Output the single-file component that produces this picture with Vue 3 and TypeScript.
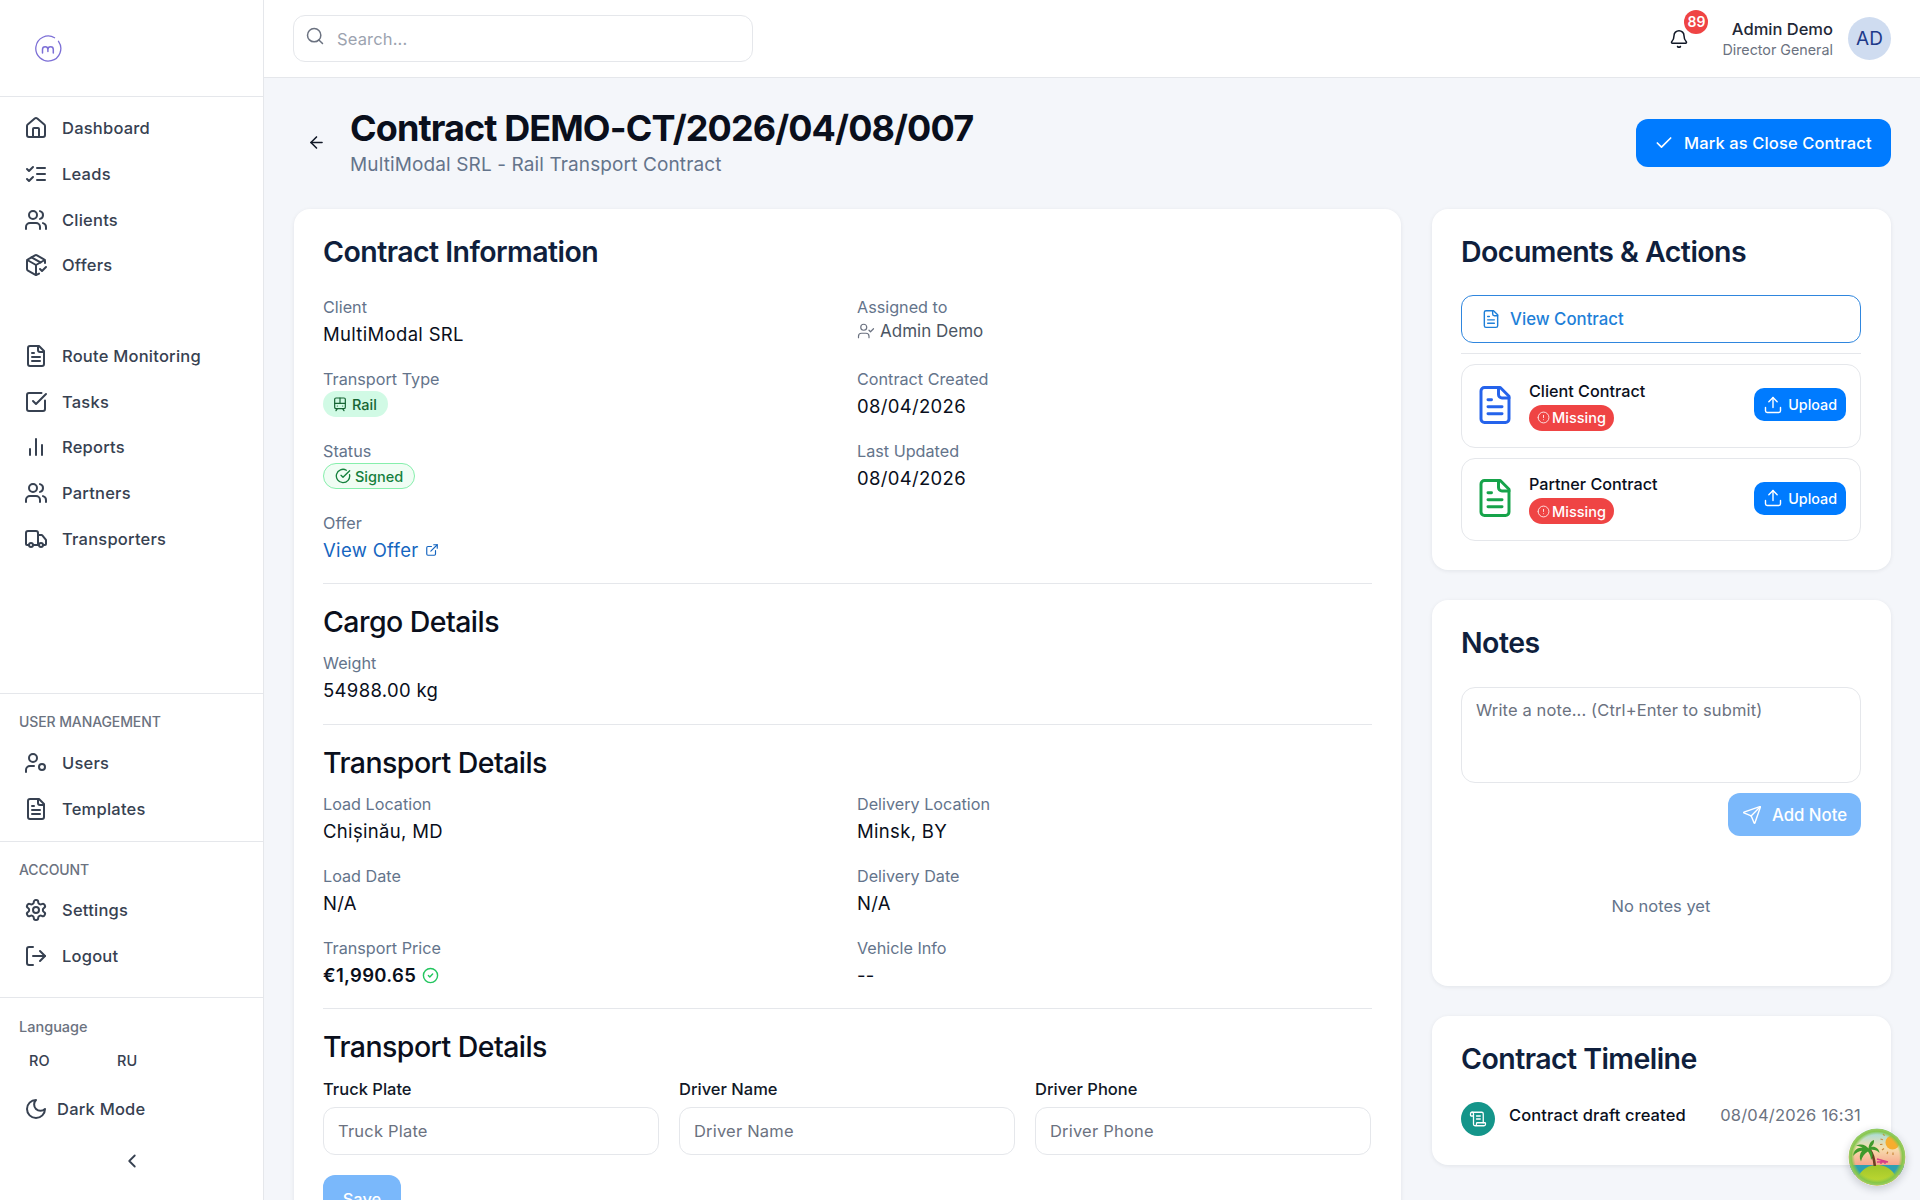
<script setup lang="ts">
import { h } from 'vue'
import type { FunctionalComponent } from 'vue'

const c = (x: number, y: number, r: number) => `M${x - r} ${y}a${r} ${r} 0 1 0 ${2 * r} 0a${r} ${r} 0 1 0 ${-2 * r} 0`

const ICONS: Record<string, string[]> = {
  house: ['M15 21v-8a1 1 0 0 0-1-1h-4a1 1 0 0 0-1 1v8', 'M3 10a2 2 0 0 1 .709-1.528l7-5.999a2 2 0 0 1 2.582 0l7 5.999A2 2 0 0 1 21 10v9a2 2 0 0 1-2 2H5a2 2 0 0 1-2-2z'],
  listChecks: ['m3 17 2 2 4-4', 'm3 7 2 2 4-4', 'M13 6h8', 'M13 12h8', 'M13 18h8'],
  users: ['M16 21v-2a4 4 0 0 0-4-4H6a4 4 0 0 0-4 4v2', c(9, 7, 4), 'M22 21v-2a4 4 0 0 0-3-3.87', 'M16 3.13a4 4 0 0 1 0 7.75'],
  packageCheck: ['m16 16 2 2 4-4', 'M21 10V8a2 2 0 0 0-1-1.73l-7-4a2 2 0 0 0-2 0l-7 4A2 2 0 0 0 3 8v8a2 2 0 0 0 1 1.73l7 4a2 2 0 0 0 2 0l2-1.14', 'm7.5 4.27 9 5.15', 'M3.29 7 12 12l8.71-5', 'M12 22V12'],
  fileText: ['M15 2H6a2 2 0 0 0-2 2v16a2 2 0 0 0 2 2h12a2 2 0 0 0 2-2V7Z', 'M14 2v4a2 2 0 0 0 2 2h4', 'M10 9H8', 'M16 13H8', 'M16 17H8'],
  squareCheck: ['M21 10.5V19a2 2 0 0 1-2 2H5a2 2 0 0 1-2-2V5a2 2 0 0 1 2-2h12.5', 'm9 11 3 3L22 4'],
  bars: ['M18 20V10', 'M12 20V4', 'M6 20v-6'],
  truck: ['M14 18V6a2 2 0 0 0-2-2H4a2 2 0 0 0-2 2v11a1 1 0 0 0 1 1h2', 'M15 18H9', 'M19 18h2a1 1 0 0 0 1-1v-3.65a1 1 0 0 0-.22-.624l-3.48-4.35A1 1 0 0 0 17.52 8H14', c(17, 18, 2), c(7, 18, 2)],
  userCog: [c(18, 16, 3), c(9, 7, 4), 'M10 15H6a4 4 0 0 0-4 4v2'],
  settings: ['M12.22 2h-.44a2 2 0 0 0-2 2v.18a2 2 0 0 1-1 1.73l-.43.25a2 2 0 0 1-2 0l-.15-.08a2 2 0 0 0-2.73.73l-.22.38a2 2 0 0 0 .73 2.73l.15.1a2 2 0 0 1 1 1.72v.51a2 2 0 0 1-1 1.74l-.15.09a2 2 0 0 0-.73 2.73l.22.38a2 2 0 0 0 2.73.73l.15-.08a2 2 0 0 1 2 0l.43.25a2 2 0 0 1 1 1.73V20a2 2 0 0 0 2 2h.44a2 2 0 0 0 2-2v-.18a2 2 0 0 1 1-1.73l.43-.25a2 2 0 0 1 2 0l.15.08a2 2 0 0 0 2.73-.73l.22-.39a2 2 0 0 0-.73-2.73l-.15-.08a2 2 0 0 1-1-1.74v-.5a2 2 0 0 1 1-1.74l.15-.09a2 2 0 0 0 .73-2.73l-.22-.38a2 2 0 0 0-2.73-.73l-.15.08a2 2 0 0 1-2 0l-.43-.25a2 2 0 0 1-1-1.73V4a2 2 0 0 0-2-2z', c(12, 12, 3)],
  logOut: ['M9 21H5a2 2 0 0 1-2-2V5a2 2 0 0 1 2-2h4', 'm16 17 5-5-5-5', 'M21 12H9'],
  moon: ['M12 3a6 6 0 0 0 9 9 9 9 0 1 1-9-9Z'],
  chevronLeft: ['m15 18-6-6 6-6'],
  search: [c(11, 11, 8), 'm21 21-4.3-4.3'],
  bell: ['M10.268 21a2 2 0 0 0 3.464 0', 'M3.262 15.326A1 1 0 0 0 4 17h16a1 1 0 0 0 .74-1.673C19.41 13.956 18 12.499 18 8A6 6 0 0 0 6 8c0 4.499-1.411 5.956-2.738 7.326'],
  arrowLeft: ['m12 19-7-7 7-7', 'M19 12H5'],
  check: ['M20 6 9 17l-5-5'],
  userCheck: ['M16 21v-2a4 4 0 0 0-4-4H6a4 4 0 0 0-4 4v2', c(9, 7, 4), 'm16 11 2 2 4-4'],
  tram: ['M6 3h12a2 2 0 0 1 2 2v12a2 2 0 0 1-2 2H6a2 2 0 0 1-2-2V5a2 2 0 0 1 2-2z', 'M4 11h16', 'M12 3v8', 'm8 19-2 3', 'm18 22-2-3', 'M8 15h.01', 'M16 15h.01'],
  circleCheckBig: ['M21.801 10A10 10 0 1 1 17 3.335', 'm9 11 3 3L22 4'],
  circleCheck: [c(12, 12, 10), 'm9 12 2 2 4-4'],
  external: ['M15 3h6v6', 'M10 14 21 3', 'M18 13v6a2 2 0 0 1-2 2H5a2 2 0 0 1-2-2V8a2 2 0 0 1 2-2h6'],
  upload: ['M12 3v12', 'm17 8-5-5-5 5', 'M21 15v4a2 2 0 0 1-2 2H5a2 2 0 0 1-2-2v-4'],
  alert: [c(12, 12, 10), 'M12 8v4', 'M12 16h.01'],
  send: ['M14.536 21.686a.5.5 0 0 0 .937-.024l6.5-19a.496.496 0 0 0-.635-.635l-19 6.5a.5.5 0 0 0-.024.937l7.93 3.18a2 2 0 0 1 1.112 1.11z', 'm21.854 2.147-10.94 10.939'],
  scroll: ['M15 12h-5', 'M15 8h-5', 'M19 17V5a2 2 0 0 0-2-2H4', 'M8 21h12a2 2 0 0 0 2-2v-1a1 1 0 0 0-1-1H11a1 1 0 0 0-1 1v1a2 2 0 1 1-4 0V5a2 2 0 1 0-4 0v2a1 1 0 0 0 1 1h3'],
}

type IconProps = { name: string; size?: number; sw?: number }
const Icon: FunctionalComponent<IconProps> = (props) =>
  h(
    'svg',
    {
      width: props.size ?? 24,
      height: props.size ?? 24,
      viewBox: '0 0 24 24',
      fill: 'none',
      stroke: 'currentColor',
      'stroke-width': props.sw ?? 2,
      'stroke-linecap': 'round',
      'stroke-linejoin': 'round',
    },
    (ICONS[props.name] ?? []).map((d) => h('path', { d })),
  )
Icon.props = ['name', 'size', 'sw']

const navA = [
  { label: 'Dashboard', icon: 'house' },
  { label: 'Leads', icon: 'listChecks' },
  { label: 'Clients', icon: 'users' },
  { label: 'Offers', icon: 'packageCheck' },
]
const navB = [
  { label: 'Route Monitoring', icon: 'fileText' },
  { label: 'Tasks', icon: 'squareCheck' },
  { label: 'Reports', icon: 'bars' },
  { label: 'Partners', icon: 'users' },
  { label: 'Transporters', icon: 'truck' },
]
const navUser = [
  { label: 'Users', icon: 'userCog' },
  { label: 'Templates', icon: 'fileText' },
]
const navAccount = [
  { label: 'Settings', icon: 'settings' },
  { label: 'Logout', icon: 'logOut' },
]
const transportRows = [
  [{ k: 'Load Location', v: 'Chișinău, MD' }, { k: 'Delivery Location', v: 'Minsk, BY' }],
  [{ k: 'Load Date', v: 'N/A' }, { k: 'Delivery Date', v: 'N/A' }],
]
const driverFields = ['Truck Plate', 'Driver Name', 'Driver Phone']
const docs = [
  { title: 'Client Contract', tone: 'blue' },
  { title: 'Partner Contract', tone: 'green' },
]
</script>

<template>
  <div class="app">
    <aside class="sidebar">
      <div class="logo">
        <svg width="29" height="29" viewBox="0 0 29 29" fill="none" stroke="#7c6fd6" stroke-linecap="round">
          <path d="M20.55 3.7A12.5 12.5 0 1 0 24.5 7.3" stroke-width="1.3" />
          <path d="M8.5 19v-3.5a2.7 2.7 0 0 1 5.4 0v2M13.9 15.5a2.7 2.7 0 0 1 5.4 0v3.5" stroke-width="1.5" />
        </svg>
      </div>
      <nav class="nav nav-top">
        <a v-for="n in navA" :key="n.label" class="item"><Icon :name="n.icon" /><span>{{ n.label }}</span></a>
      </nav>
      <nav class="nav nav-second">
        <a v-for="n in navB" :key="n.label" class="item"><Icon :name="n.icon" /><span>{{ n.label }}</span></a>
      </nav>
      <section class="side-section push">
        <div class="side-label upper">USER MANAGEMENT</div>
        <a v-for="n in navUser" :key="n.label" class="item"><Icon :name="n.icon" /><span>{{ n.label }}</span></a>
      </section>
      <section class="side-section account">
        <div class="side-label upper">ACCOUNT</div>
        <a v-for="n in navAccount" :key="n.label" class="item"><Icon :name="n.icon" /><span>{{ n.label }}</span></a>
      </section>
      <section class="side-section lang">
        <div class="side-label lang-label">Language</div>
        <div class="langs"><span>RO</span><span>RU</span></div>
        <a class="item dark"><Icon name="moon" /><span>Dark Mode</span></a>
        <div class="collapse"><Icon name="chevronLeft" :size="22" /></div>
      </section>
    </aside>

    <div class="main">
      <header class="topbar">
        <div class="search">
          <Icon name="search" :size="20" :sw="1.8" class="search-icon" />
          <input placeholder="Search..." />
        </div>
        <div class="top-right">
          <div class="bell">
            <Icon name="bell" :size="20" :sw="1.8" />
            <span class="badge">89</span>
          </div>
          <div class="who">
            <div class="who-name">Admin Demo</div>
            <div class="who-role">Director General</div>
          </div>
          <div class="avatar">AD</div>
        </div>
      </header>

      <div class="content">
        <div class="page-head">
          <Icon name="arrowLeft" :size="19" class="back" />
          <div class="page-title">
            <h1>Contract DEMO-CT/2026/04/08/007</h1>
            <p>MultiModal SRL - Rail Transport Contract</p>
          </div>
          <button class="primary close"><Icon name="check" :size="20" /><span>Mark as Close Contract</span></button>
        </div>

        <div class="columns">
          <div class="card info">
            <h2 class="card-title">Contract Information</h2>
            <div class="grid">
              <div class="cell">
                <div class="k">Client</div>
                <div class="v">MultiModal SRL</div>
              </div>
              <div class="cell">
                <div class="k">Assigned to</div>
                <div class="v assigned"><Icon name="userCheck" :size="18" :sw="1.6" /><span>Admin Demo</span></div>
              </div>
              <div class="cell">
                <div class="k">Transport Type</div>
                <div class="pill rail"><Icon name="tram" :size="16" :sw="1.8" /><span>Rail</span></div>
              </div>
              <div class="cell">
                <div class="k">Contract Created</div>
                <div class="v">08/04/2026</div>
              </div>
              <div class="cell">
                <div class="k">Status</div>
                <div class="pill signed"><Icon name="circleCheckBig" :size="16" /><span>Signed</span></div>
              </div>
              <div class="cell">
                <div class="k">Last Updated</div>
                <div class="v">08/04/2026</div>
              </div>
              <div class="cell">
                <div class="k">Offer</div>
                <div class="v link"><span>View Offer</span><Icon name="external" :size="14" /></div>
              </div>
            </div>

            <div class="section cargo">
              <h3>Cargo Details</h3>
              <div class="cell">
                <div class="k">Weight</div>
                <div class="v">54988.00 kg</div>
              </div>
            </div>

            <div class="section transport">
              <h3>Transport Details</h3>
              <div class="grid">
                <template v-for="(row, i) in transportRows" :key="i">
                  <div v-for="f in row" :key="f.k" class="cell">
                    <div class="k">{{ f.k }}</div>
                    <div class="v">{{ f.v }}</div>
                  </div>
                </template>
                <div class="cell">
                  <div class="k">Transport Price</div>
                  <div class="v price"><span>€1,990.65</span><Icon name="circleCheck" :size="17" class="ok" /></div>
                </div>
                <div class="cell">
                  <div class="k">Vehicle Info</div>
                  <div class="v">--</div>
                </div>
              </div>
            </div>

            <div class="section driver">
              <h3>Transport Details</h3>
              <div class="fields">
                <label v-for="f in driverFields" :key="f" class="field">
                  <span>{{ f }}</span>
                  <input :placeholder="f" />
                </label>
              </div>
              <button class="primary save">Save</button>
            </div>
          </div>

          <div class="side-cards">
            <div class="card docs">
              <h2 class="card-title">Documents &amp; Actions</h2>
              <button class="outline"><Icon name="fileText" :size="20" :sw="1.7" /><span>View Contract</span></button>
              <div class="doc-list">
                <div v-for="d in docs" :key="d.title" class="doc">
                  <Icon name="fileText" :size="42" :sw="1.7" :class="['doc-icon', d.tone]" />
                  <div class="doc-body">
                    <div class="doc-title">{{ d.title }}</div>
                    <div class="missing"><Icon name="alert" :size="13" :sw="1.5" /><span>Missing</span></div>
                  </div>
                  <button class="primary upload"><Icon name="upload" :size="20" :sw="1.7" /><span>Upload</span></button>
                </div>
              </div>
            </div>

            <div class="card notes">
              <h2 class="card-title">Notes</h2>
              <textarea placeholder="Write a note... (Ctrl+Enter to submit)"></textarea>
              <div class="note-actions">
                <button class="primary add"><Icon name="send" :size="20" :sw="1.7" /><span>Add Note</span></button>
              </div>
              <div class="empty">No notes yet</div>
            </div>

            <div class="card timeline">
              <h2 class="card-title">Contract Timeline</h2>
              <div class="event">
                <div class="event-icon"><Icon name="scroll" :size="18" :sw="1.7" /></div>
                <div class="event-text">Contract draft created</div>
                <div class="event-date">08/04/2026 16:31</div>
              </div>
            </div>
          </div>
        </div>
      </div>
    </div>

    <div class="fab">
      <svg width="58" height="58" viewBox="0 0 58 58">
        <defs>
          <linearGradient id="sky" x1="0" y1="0" x2="0" y2="1">
            <stop offset="0.08" stop-color="#a8dcd8" />
            <stop offset="0.35" stop-color="#f7dfae" />
            <stop offset="0.7" stop-color="#f79a86" />
          </linearGradient>
          <radialGradient id="rim" cx="0.5" cy="0.5" r="0.5">
            <stop offset="0.78" stop-color="#8cc850" stop-opacity="0" />
            <stop offset="0.9" stop-color="#84c648" stop-opacity="0.95" />
            <stop offset="1" stop-color="#9dcc6a" />
          </radialGradient>
          <linearGradient id="land" x1="0" y1="0" x2="0" y2="1">
            <stop offset="0" stop-color="#9fc52a" />
            <stop offset="1" stop-color="#c4dc32" />
          </linearGradient>
          <clipPath id="ball"><circle cx="29" cy="29" r="28.5" /></clipPath>
        </defs>
        <g clip-path="url(#ball)">
          <rect width="58" height="58" fill="url(#sky)" />
          <circle cx="44.5" cy="14.5" r="7" fill="#f7ad2e" />
          <path d="M35 6l1.6 1.6M32.5 11l2.4.8M32 16.5l2.4-.2M34 22l2-1.4M39 26l.8-2.2M45 27v-2.4" stroke="#c98a3c" stroke-width="1.2" />
          <path d="M0 37h58v10H0z" fill="#2e9fb2" />
          <path d="M9 58C8 46 17 37 29 37s21 9 20 21z" fill="url(#land)" />
          <path d="M25.5 38c-.6-7-2.2-12-5-16l2.4-1c3 4.2 4.6 9.6 5.2 17z" fill="#6b3f22" />
          <path d="M21 21c-3-4-8-6-13-3 3 0 5 .6 6.600 2C10 19 5.500 22 5 28c3-3.400 6-5 9-5.200C11.500 26 11 30 13 33.500c1-4.500 3.500-8 7-10 1.500 2 3 5 3 8.500 2.500-3.500 2-7.500-.5-10 3-.8 6.500.3 9 3-.3-4.500-4.500-7-8.500-6 2-2 3.300-4 3-7-3.500 1-5.300 4.500-5.500 9z" fill="#3f9a2c" />
          <path d="M29 31l11 3M29 34h10M33 32v4M37 33v3" stroke="#d83f86" stroke-width="1.4" fill="none" />
          <circle cx="29" cy="29" r="28.500" fill="url(#rim)" />
        </g>
      </svg>
    </div>
  </div>
</template>

<style>
html, body { margin: 0; height: 100%; overflow: hidden; }
</style>

<style scoped>
* { box-sizing: border-box; }
.app {
  position: relative;
  display: flex;
  height: 1200px;
  overflow: hidden;
  background: #f4f6fa;
  font-family: Inter, "Noto Sans", sans-serif;
  color: #0a0f1c;
}
.sidebar {
  flex: 0 0 264px;
  display: flex;
  flex-direction: column;
  background: #fff;
  border-right: 1px solid #e5e7eb;
}
.logo {
  height: 97px;
  flex: none;
  padding: 34px 0 0 34px;
  border-bottom: 1px solid #e5e7eb;
}
.logo svg { display: block; }
.nav { display: flex; flex-direction: column; flex: none; }
.nav-top { padding-top: 8.5px; }
.nav-second { margin-top: 45px; }
.item {
  display: flex;
  align-items: center;
  gap: 14px;
  height: 45.7px;
  padding-left: 24px;
  font-size: 16.5px;
  font-weight: 500;
  letter-spacing: 0.22px;
  color: #374151;
  flex: none;
}
.item svg { flex: none; }
.side-section { flex: none; border-top: 1px solid #e5e7eb; }
.push { margin-top: auto; padding: 18px 0 9px; }
.account { padding: 18px 0 18px; }
.side-label {
  height: 20px;
  line-height: 20px;
  margin: 0 0 8px 19px;
  font-size: 14.5px;
  font-weight: 500;
  color: #6b7280;
}
.upper { font-size: 14px; letter-spacing: -0.1px; }
.lang { padding-top: 19px; height: 203px; }
.lang-label { margin-bottom: 0; }
.langs {
  display: flex;
  margin-top: 14px;
  padding-left: 29px;
  font-size: 14.5px;
  font-weight: 500;
  color: #374151;
  line-height: 20px;
}
.langs span { width: 88px; }
.dark { gap: 9px; margin-top: 15px; }
.collapse {
  display: flex;
  justify-content: center;
  margin-top: 18px;
  color: #374151;
}
.main { flex: 1; min-width: 0; display: flex; flex-direction: column; }
.topbar {
  flex: none;
  height: 78px;
  display: flex;
  align-items: center;
  justify-content: space-between;
  padding: 0 29px;
  background: #fff;
  border-bottom: 1px solid #e5e7eb;
}
.search {
  position: relative;
  width: 460px;
  height: 47px;
}
.search input {
  width: 100%;
  height: 100%;
  padding-left: 43px;
  border: 1px solid #e5e7eb;
  border-radius: 12px;
  background: #fff;
  font: 400 16.5px Inter, sans-serif;
  letter-spacing: 0.15px;
  outline: none;
}
.search input::placeholder { color: #9ca3af; }
.search-icon { position: absolute; left: 12px; top: 11px; color: #6b7280; }
.top-right { display: flex; align-items: center; }
.bell { position: relative; width: 20px; height: 20px; margin-right: 33px; color: #111827; }
.badge {
  position: absolute;
  left: 15px;
  top: -19px;
  width: 24px;
  height: 24px;
  border-radius: 50%;
  background: #ef4444;
  color: #fff;
  font-size: 14px;
  font-weight: 600;
  line-height: 24px;
  text-align: center;
}
.who { text-align: right; margin-right: 15px; }
.who-name { font-size: 16.5px; font-weight: 500; line-height: 22px; color: #1f2937; }
.who-role { font-size: 14.3px; line-height: 20px; color: #6b7280; }
.avatar {
  width: 43px;
  height: 43px;
  border-radius: 50%;
  background: #cfdcf0;
  color: #1e3a8a;
  font-size: 19px;
  line-height: 43px;
  text-align: center;
}
.content { flex: 1; padding: 0 29px 0 30px; }
.page-head {
  display: flex;
  align-items: center;
  height: 131px;
}
.back { margin: -2px 0 0 13px; color: #111827; flex: none; }
.page-title { margin-left: 24px; flex: 1; margin-top: -3px; }
.page-title h1 {
  margin: 0;
  font-size: 36px;
  font-weight: 700;
  line-height: 44px;
  letter-spacing: -0.9px;
  color: #0a0f1c;
}
.page-title p {
  margin: 2px 0 0;
  font-size: 19px;
  line-height: 26px;
  letter-spacing: 0.12px;
  color: #64748b;
}
.primary {
  display: inline-flex;
  align-items: center;
  border: 0;
  background: #007bff;
  color: #fff;
  font-family: Inter, sans-serif;
  font-weight: 500;
}
.close {
  width: 255px;
  height: 48px;
  margin-top: -2px;
  gap: 10px;
  padding: 0 0 0 18px;
  justify-content: flex-start;
  border-radius: 12px;
  font-size: 16.5px;
  letter-spacing: 0.12px;
}
.columns {
  display: grid;
  grid-template-columns: 1107px 459px;
  column-gap: 31px;
  align-items: start;
}
.card {
  background: #fff;
  border-radius: 16px;
  box-shadow: 0 1px 4px rgba(15, 23, 42, 0.08);
}
.card-title {
  margin: 0;
  font-size: 28.5px;
  font-weight: 600;
  line-height: 38px;
  letter-spacing: -0.55px;
  color: #0f1f3d;
}
.info { padding: 24px 29px 40px; }
.grid {
  display: grid;
  grid-template-columns: 514px 514px;
  column-gap: 20px;
  row-gap: 19px;
}
.info > .grid { margin-top: 24px; }
.cell { min-width: 0; height: 53px; }
.k { font-size: 16.2px; line-height: 24px; color: #64748b; }
.v { margin-top: 1px; font-size: 18.5px; line-height: 28px; letter-spacing: 0.32px; color: #0a0f1c; }
.assigned {
  display: flex;
  align-items: center;
  gap: 5px;
  margin-top: 0;
  line-height: 24px;
  font-size: 17px;
  letter-spacing: 0;
  color: #4b5563;
}
.assigned svg { color: #6b7280; }
.pill {
  display: inline-flex;
  align-items: center;
  gap: 4px;
  height: 26px;
  border-radius: 13px;
  font-size: 14.5px;
  font-weight: 500;
}
.rail { padding: 0 11px 0 9px; background: #d1fae5; color: #166534; }
.signed {
  padding: 0 11px;
  background: #f0fdf4;
  border: 1px solid #86efac;
  color: #15803d;
}
.link {
  display: flex;
  align-items: center;
  gap: 6px;
  color: #1565c0;
}
.section { border-top: 1px solid #e5e7eb; }
.section h3 {
  margin: 0;
  font-size: 28.5px;
  font-weight: 500;
  line-height: 38px;
  letter-spacing: -0.55px;
  color: #0a0f1c;
}
.cargo { margin-top: 19px; padding-top: 19px; }
.cargo .cell { margin-top: 10px; }
.transport { margin-top: 20px; padding-top: 19px; }
.transport .grid { margin-top: 10px; }
.price { display: flex; align-items: center; gap: 6px; font-weight: 600; }
.ok { color: #22c55e; }
.driver { margin-top: 19px; padding-top: 19px; }
.fields {
  display: grid;
  grid-template-columns: repeat(3, 336px);
  column-gap: 20px;
  margin-top: 11px;
}
.field span {
  display: block;
  font-size: 16.5px;
  font-weight: 500;
  line-height: 24px;
  color: #111827;
}
.field input {
  display: block;
  width: 100%;
  height: 48px;
  margin-top: 6px;
  padding: 0 14px;
  border: 1px solid #e5e7eb;
  border-radius: 12px;
  font: 400 16.5px Inter, sans-serif;
  letter-spacing: 0.2px;
  outline: none;
}
.field input::placeholder, textarea::placeholder { color: #6b7280; }
.save {
  width: 78px;
  height: 47px;
  margin-top: 20px;
  justify-content: center;
  border-radius: 12px;
  background: #7ab8fb;
  font-size: 16.5px;
}
.side-cards { display: flex; flex-direction: column; gap: 30px; }
.docs { height: 361px; padding: 24px 30px 0 29px; }
.outline {
  display: flex;
  align-items: center;
  gap: 9px;
  width: 100%;
  height: 48px;
  margin-top: 24px;
  padding-left: 19px;
  border: 1.5px solid #2f86de;
  border-radius: 12px;
  background: #fff;
  color: #1e7fd8;
  font: 500 16.8px Inter, sans-serif;
}
.doc-list {
  margin-top: 10px;
  padding-top: 10px;
  border-top: 1px solid #e5e7eb;
  display: flex;
  flex-direction: column;
  gap: 10px;
}
.doc {
  display: flex;
  align-items: center;
  height: 83.5px;
  padding: 0 14px 2px 12px;
  border: 1px solid #e5e7eb;
  border-radius: 14px;
}
.doc-icon { flex: none; }
.blue { color: #2563eb; }
.green { color: #16a34a; }
.doc-body { margin-left: 13px; flex: 1; }
.doc-title { font-size: 16.2px; font-weight: 500; line-height: 24px; color: #0a0f1c; }
.missing {
  display: inline-flex;
  align-items: center;
  gap: 2px;
  height: 26px;
  margin-top: 2px;
  padding: 0 8px;
  border-radius: 13px;
  background: #ef4444;
  color: #fff;
  font-size: 14.5px;
  font-weight: 500;
}
.upload {
  gap: 5px;
  height: 33px;
  padding: 0 9px;
  border-radius: 10px;
  font-size: 14.3px;
  flex: none;
}
.notes { height: 386px; padding: 24px 30px 0 29px; }
textarea {
  display: block;
  width: 100%;
  height: 96px;
  margin-top: 25px;
  padding: 12px 14px;
  border: 1px solid #e5e7eb;
  border-radius: 14px;
  resize: none;
  font: 400 16.5px Inter, sans-serif;
  letter-spacing: 0.13px;
  outline: none;
}
.note-actions { display: flex; justify-content: flex-end; margin-top: 10px; }
.add {
  width: 133px;
  height: 43px;
  gap: 10px;
  justify-content: center;
  border-radius: 12px;
  background: #7ab8fb;
  font-size: 16.8px;
}
.empty {
  margin-top: 58px;
  text-align: center;
  font-size: 16.5px;
  line-height: 24px;
  color: #64748b;
}
.timeline { height: 149px; padding: 24px 30px 0 29px; }
.event { display: flex; align-items: center; margin-top: 24px; }
.event-icon {
  width: 34px;
  height: 34px;
  border-radius: 50%;
  background: #14958a;
  color: #fff;
  display: flex;
  align-items: center;
  justify-content: center;
  flex: none;
}
.event-text {
  flex: 1;
  margin: -8px 0 0 14px;
  font-size: 16.5px;
  font-weight: 500;
  line-height: 24px;
  letter-spacing: 0.1px;
  color: #0a0f1c;
}
.event-date {
  margin-top: -8px;
  font-size: 16.5px;
  line-height: 24px;
  letter-spacing: 0.2px;
  color: #6b7280;
}
.fab {
  position: absolute;
  left: 1848px;
  top: 1128px;
  width: 58px;
  height: 58px;
  border-radius: 50%;
  box-shadow: 0 3px 8px rgba(15, 23, 42, 0.2);
}
.fab svg { display: block; }
</style>
